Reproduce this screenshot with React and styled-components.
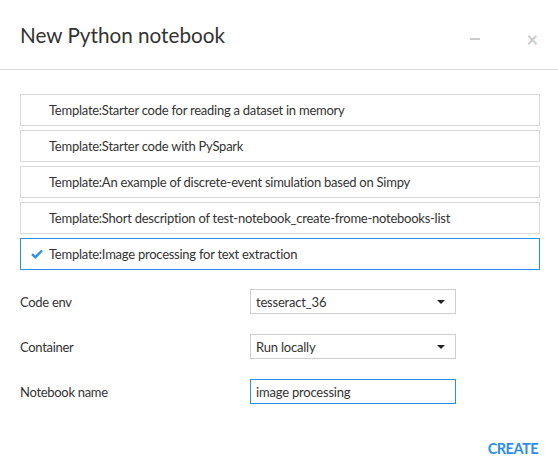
import React, { useState } from 'react';
import styled, { createGlobalStyle } from 'styled-components';

const GlobalStyle = createGlobalStyle`
  html, body {
    margin: 0;
    padding: 0;
    background: #fff;
  }
  body {
    font-family: Lato, "Open Sans", sans-serif;
    color: #333;
  }
`;

const templates = [
  'Template:Starter code for reading a dataset in memory',
  'Template:Starter code with PySpark',
  'Template:An example of discrete-event simulation based on Simpy',
  'Template:Short description of test-notebook_create-frome-notebooks-list',
  'Template:Image processing for text extraction',
];

function App() {
  const [selected, setSelected] = useState(4);

  return (
    <Dialog>
      <GlobalStyle />
      <Header>
        <Title>New Python notebook</Title>
        <Controls>
          <Minimize />
          <Close>×</Close>
        </Controls>
      </Header>
      <Body>
        <TemplateList>
          {templates.map((t, i) => (
            <TemplateItem key={t} active={i === selected} onClick={() => setSelected(i)}>
              <Check>
                {i === selected && (
                  <svg width="12" height="10" viewBox="0 0 12 10">
                    <path d="M1 5.2 L4.3 8.3 L11 1.5" fill="none" stroke="#2d8ee8" strokeWidth="2.4" />
                  </svg>
                )}
              </Check>
              {t}
            </TemplateItem>
          ))}
        </TemplateList>
        <Form>
          <Row>
            <Label>Code env</Label>
            <Select>
              tesseract_36
              <Caret />
            </Select>
          </Row>
          <Row>
            <Label>Container</Label>
            <Select>
              Run locally
              <Caret />
            </Select>
          </Row>
          <Row>
            <Label>Notebook name</Label>
            <Input defaultValue="image processing" />
          </Row>
        </Form>
      </Body>
      <Footer>
        <CreateButton>CREATE</CreateButton>
      </Footer>
    </Dialog>
  );
}

const Dialog = styled.div`
  width: 558px;
  height: 475px;
  display: flex;
  flex-direction: column;
  background: #fff;
`;

const Header = styled.div`
  height: 70px;
  box-sizing: border-box;
  display: flex;
  align-items: center;
  justify-content: space-between;
  padding: 0 20px 0 20px;
  border-bottom: 1px solid #dcdcdc;
`;

const Title = styled.h1`
  margin: 0;
  font-size: 20.7px;
  font-weight: 400;
  color: #333;
`;

const Controls = styled.div`
  display: flex;
  align-items: center;
  gap: 46px;
  margin-top: 8px;
`;

const Minimize = styled.span`
  display: block;
  width: 10px;
  height: 2px;
  background: #ccc;
`;

const Close = styled.span`
  font-size: 20px;
  line-height: 1;
  color: #ccc;
  font-weight: 700;
`;

const Body = styled.div`
  padding: 24px 18px 0 20px;
  flex: 1;
`;

const TemplateList = styled.div`
  display: flex;
  flex-direction: column;
  gap: 4px;
`;

const TemplateItem = styled.div`
  height: 32px;
  box-sizing: border-box;
  display: flex;
  align-items: center;
  padding-left: 10px;
  border: 1px solid ${(p) => (p.active ? '#2d8ee8' : '#d9d9d9')};
  font-size: 13px;
  letter-spacing: -0.25px;
  color: #333;
  cursor: pointer;
`;

const Check = styled.span`
  width: 18px;
  display: inline-flex;
  align-items: center;
`;

const Form = styled.div`
  margin-top: 19px;
  display: flex;
  flex-direction: column;
  gap: 20px;
`;

const Row = styled.div`
  display: grid;
  grid-template-columns: 230px 206px;
  align-items: center;
  height: 25px;
`;

const Label = styled.span`
  font-size: 13px;
  letter-spacing: -0.3px;
  color: #333;
`;

const Select = styled.div`
  height: 25px;
  box-sizing: border-box;
  border: 1px solid #cfcfcf;
  display: flex;
  align-items: center;
  justify-content: space-between;
  padding: 0 10px 0 5px;
  font-size: 13px;
  letter-spacing: -0.2px;
  color: #333;
`;

const Caret = styled.span`
  width: 0;
  height: 0;
  border-left: 4px solid transparent;
  border-right: 4px solid transparent;
  border-top: 4px solid #222;
`;

const Input = styled.input`
  height: 25px;
  box-sizing: border-box;
  border: 1px solid #2d8ee8;
  outline: none;
  padding: 0 5px;
  font-family: Lato, "Open Sans", sans-serif;
  font-size: 13px;
  letter-spacing: -0.2px;
  color: #333;
`;

const Footer = styled.div`
  display: flex;
  justify-content: flex-end;
  padding: 0 20px 18px 0;
`;

const CreateButton = styled.button`
  border: none;
  background: none;
  padding: 0;
  font-family: Lato, "Open Sans", sans-serif;
  font-size: 14.5px;
  font-weight: 700;
  letter-spacing: -0.5px;
  color: #2d8ee8;
  cursor: pointer;
`;

export default App;
